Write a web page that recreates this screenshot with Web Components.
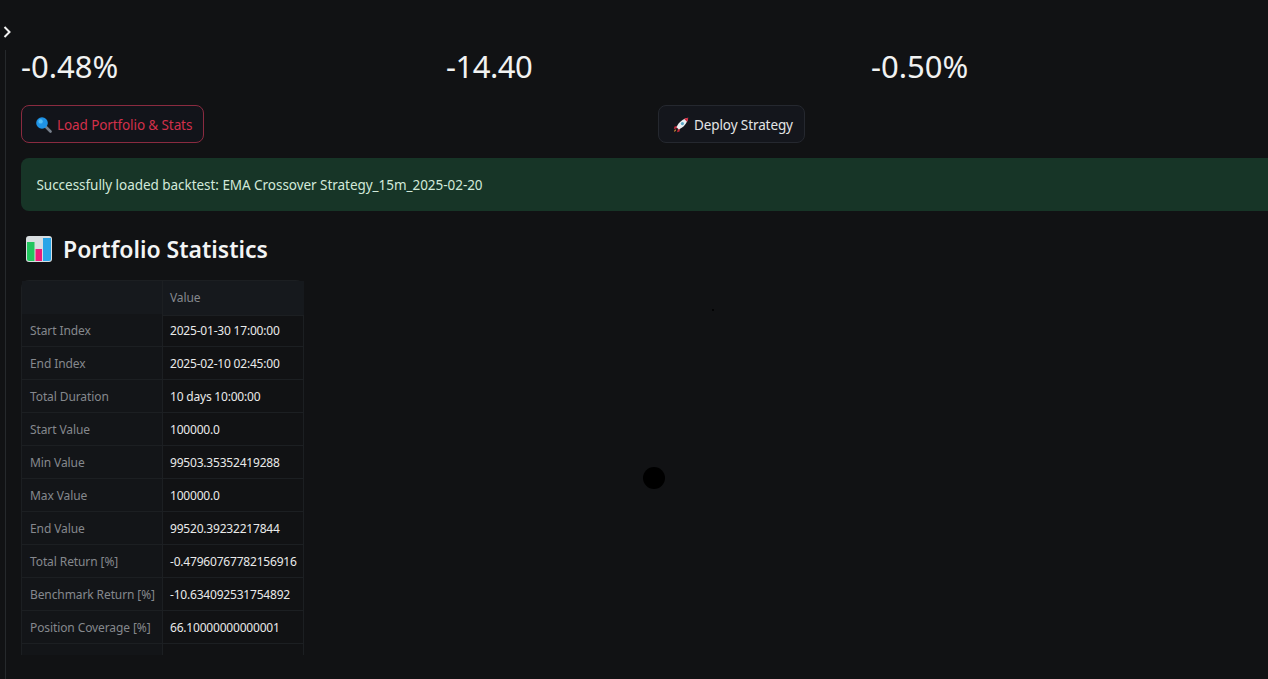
<!DOCTYPE html>
<html>
<head>
<meta charset="utf-8">
<title>Backtest</title>
<style>
html, body { margin: 0; height: 100%; background: #111214; overflow: hidden; }
body { font-family: "Noto Sans", "Open Sans", sans-serif; color: #fafafa; }
</style>
</head>
<body>
<app-shell>
    <metric-row>
        <metric-value>-0.48%</metric-value>
        <metric-value style="letter-spacing:-0.5px">-14.40</metric-value>
        <metric-value>-0.50%</metric-value>
    </metric-row>
    <action-row>
        <app-button variant="primary">
            <svg slot="icon" width="17" height="17" viewBox="0 0 17 17">
                <path d="M10.5 10.5 L15.5 15.5" stroke="#77808c" stroke-width="2.6" stroke-linecap="round"/>
                <circle cx="7" cy="7" r="5.8" fill="#1f93e6"/>
                <circle cx="5.6" cy="5.4" r="2.2" fill="#53bdf5"/>
            </svg>
            Load Portfolio &amp; Stats
        </app-button>
        <app-button>
            <svg slot="icon" width="16" height="16" viewBox="0 0 16 16">
                <path d="M4 9 L1.5 9.5 L0.8 12 L4.5 11 Z" fill="#c5283d"/>
                <path d="M7 12 L6.5 14.5 L4 15.2 L5 11.5 Z" fill="#c5283d"/>
                <path d="M2.5 14 L1.2 15 L1.6 12.8 L3.2 12.6 Z" fill="#f0a13a"/>
                <path d="M3.5 10.2 C5.5 5.5 9.5 2 15.2 0.8 C14 6.5 10.5 10.5 5.8 12.5 Z" fill="#e8eef0"/>
                <path d="M11 1.8 C12.5 1.3 14 1 15.2 0.8 C15 2 14.7 3.5 14.2 5 Z" fill="#d3263d"/>
                <circle cx="9.4" cy="6.6" r="1.6" fill="#5aa9c8"/>
            </svg>
            Deploy Strategy
        </app-button>
    </action-row>
    <alert-box>Successfully loaded backtest: EMA Crossover Strategy_15m_2025-02-20</alert-box>
    <section-heading>
        <svg slot="icon" width="26" height="26" viewBox="0 0 26 26">
            <rect width="26" height="26" rx="3" fill="#d9dee1"/>
            <path d="M1 6 H8.5 V25 H3 Q1 25 1 23 Z" fill="#22c55e"/>
            <rect x="9.5" y="13" width="6.5" height="12" fill="#ec1c79"/>
            <path d="M17 2 H25 V23 Q25 25 23 25 H17 Z" fill="#2aa5e8"/>
        </svg>
        Portfolio Statistics
    </section-heading>
    <stats-table></stats-table>
</app-shell>
<pointer-dot style="left:643px;top:467px;--size:22px"></pointer-dot>
<pointer-dot style="left:712px;top:309px;--size:2px"></pointer-dot>

<script>
class AppShell extends HTMLElement {
    constructor() {
        super();
        this.attachShadow({ mode: "open" });
        this.shadowRoot.innerHTML = `
<style>
:host { display: block; height: 679px; box-sizing: border-box; position: relative; }
.toggle { display: block; height: 50px; box-sizing: border-box; padding: 26px 0 0 3px; }
.toggle svg { display: block; }
.main { display: flex; flex-direction: column; margin-left: 5px; padding-left: 15px; border-left: 1px solid #26292c; height: 629px; width: 1300px; box-sizing: border-box; }
</style>
<div class="toggle">
    <svg width="9" height="12" viewBox="0 0 9 12" fill="none"><path d="M1.5 1 L6.5 6 L1.5 11" stroke="#f2f2f2" stroke-width="2"/></svg>
</div>
<div class="main"><slot></slot></div>`;
    }
}

class MetricRow extends HTMLElement {
    constructor() {
        super();
        this.attachShadow({ mode: "open" });
        this.shadowRoot.innerHTML = `
<style>
:host { display: grid; grid-template-columns: 425px 425px 425px; height: 55px; }
</style>
<slot></slot>`;
    }
}

class MetricValue extends HTMLElement {
    constructor() {
        super();
        this.attachShadow({ mode: "open" });
        this.shadowRoot.innerHTML = `
<style>
:host { display: block; font-size: 31px; line-height: 33px; color: #f1f2f2; }
</style>
<slot></slot>`;
    }
}

class ActionRow extends HTMLElement {
    constructor() {
        super();
        this.attachShadow({ mode: "open" });
        this.shadowRoot.innerHTML = `
<style>
:host { display: grid; grid-template-columns: 637px 200px; height: 53px; align-items: start; }
</style>
<slot></slot>`;
    }
}

class AppButton extends HTMLElement {
    constructor() {
        super();
        this.attachShadow({ mode: "open" });
        this.shadowRoot.innerHTML = `
<style>
:host { display: inline-flex; justify-self: start; align-items: center; gap: 5px; box-sizing: border-box; height: 38px; padding: 1px 11px 0 14px; border: 1px solid #25282f; border-radius: 8px; background: #14161c; font-size: 13.5px; letter-spacing: -0.1px; color: #e4e5e6; white-space: nowrap; }
:host([variant="primary"]) { padding-left: 13px; border-color: #8a2b40; color: #d2304a; background: #12141a; }
::slotted(svg) { flex: none; }
</style>
<slot name="icon"></slot><slot></slot>`;
    }
}

class AlertBox extends HTMLElement {
    constructor() {
        super();
        this.attachShadow({ mode: "open" });
        this.shadowRoot.innerHTML = `
<style>
:host { display: block; box-sizing: border-box; height: 53px; padding: 1px 15px 0 15.5px; line-height: 53px; border-radius: 8px; background: #173527; color: #d2e9da; font-size: 13.5px; letter-spacing: -0.04px; }
</style>
<slot></slot>`;
    }
}

class SectionHeading extends HTMLElement {
    constructor() {
        super();
        this.attachShadow({ mode: "open" });
        this.shadowRoot.innerHTML = `
<style>
:host { display: flex; align-items: center; gap: 11px; box-sizing: border-box; height: 69px; padding: 7px 0 0 5px; font-size: 23px; font-weight: 600; letter-spacing: 0; color: #f3f4f4; }
::slotted(svg) { flex: none; }
</style>
<slot name="icon"></slot><slot></slot>`;
    }
}

const STATS = [
    ["Start Index", "2025-01-30 17:00:00"],
    ["End Index", "2025-02-10 02:45:00"],
    ["Total Duration", "10 days 10:00:00"],
    ["Start Value", "100000.0"],
    ["Min Value", "99503.35352419288"],
    ["Max Value", "100000.0"],
    ["End Value", "99520.39232217844"],
    ["Total Return [%]", "-0.47960767782156916"],
    ["Benchmark Return [%]", "-10.634092531754892"],
    ["Position Coverage [%]", "66.10000000000001"],
    ["Max Gross Exposure [%]", "100.0"],
];

class StatsTable extends HTMLElement {
    constructor() {
        super();
        this.attachShadow({ mode: "open" });
        const rows = STATS.map(([k, v]) => `<div class="k">${k}</div><div class="v">${v}</div>`).join("");
        this.shadowRoot.innerHTML = `
<style>
:host { display: block; width: 283px; height: 375px; overflow: hidden; }
.grid { display: grid; grid-template-columns: 141px 142px; grid-auto-rows: 33px; border: 1px solid #1c1f22; border-bottom: 0; border-radius: 8px 8px 0 0; box-sizing: border-box; width: 283px; font-size: 12px; letter-spacing: -0.1px; }
.grid > div { box-sizing: border-box; padding: 1px 0 0 8px; line-height: 32px; border-bottom: 1px solid #1c1f22; white-space: nowrap; overflow: hidden; }
.grid > .h { height: 35px; padding-top: 0; background: #16191d; color: #85888d; line-height: 34px; }
.k { color: #85888d; background: #131518; border-right: 1px solid #1c1f22; }
.grid > .v { color: #e9eaea; padding-left: 7px; letter-spacing: -0.2px; }
</style>
<div class="grid">
    <div class="h" style="border-right:1px solid #1c1f22"></div><div class="h" style="padding-left:7px">Value</div>
    ${rows}
</div>`;
    }
}

class PointerDot extends HTMLElement {
    constructor() {
        super();
        this.attachShadow({ mode: "open" });
        this.shadowRoot.innerHTML = `
<style>
:host { display: block; position: absolute; width: var(--size); height: var(--size); border-radius: 50%; background: #000; }
</style>`;
    }
}

customElements.define("app-shell", AppShell);
customElements.define("metric-row", MetricRow);
customElements.define("metric-value", MetricValue);
customElements.define("action-row", ActionRow);
customElements.define("app-button", AppButton);
customElements.define("alert-box", AlertBox);
customElements.define("section-heading", SectionHeading);
customElements.define("stats-table", StatsTable);
customElements.define("pointer-dot", PointerDot);
</script>
</body>
</html>
